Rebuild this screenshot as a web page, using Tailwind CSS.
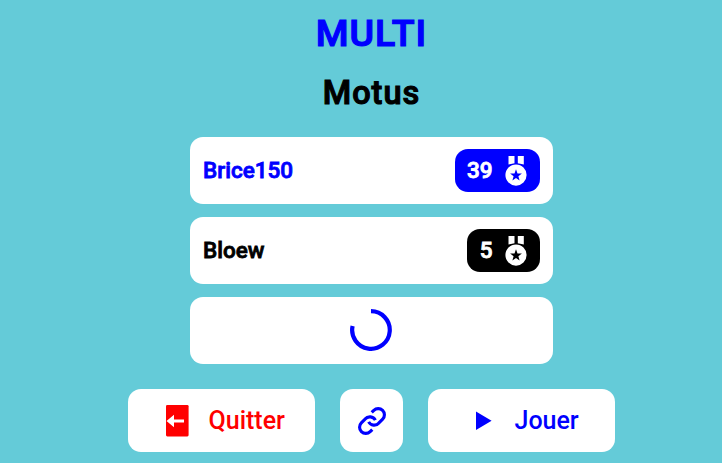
<!DOCTYPE html>
<html lang="fr">
<head>
<meta charset="utf-8">
<title>Motus</title>
<script src="https://cdn.jsdelivr.net/npm/@tailwindcss/browser@4"></script>
</head>
<body class="h-[463px] overflow-hidden bg-[#64cbd8] font-[Roboto,sans-serif] text-black">
<main class="flex flex-col items-center pt-[8px] pl-[21px]">
  <h1 class="h-[50px] text-[37.5px] leading-[50px] font-medium tracking-[1px] text-[#00f] [-webkit-text-stroke:1.2px]">MULTI</h1>
  <h2 class="mt-[13px] h-[44px] text-[32.5px] leading-[44px] font-medium tracking-[1px] [-webkit-text-stroke:1.1px]">Motus</h2>
  <ul class="mt-[22px] flex w-[363px] flex-col gap-[13px] text-[22.5px] font-medium [-webkit-text-stroke:0.8px]">
    <li class="flex h-[67px] items-center justify-between rounded-[13px] bg-white px-[13px]">
      <span class="text-[#00f]">Brice150</span>
      <span class="flex h-[43px] items-center gap-[12.5px] rounded-[13px] bg-[#00f] pr-[13px] pl-[12px] text-white">
        <span>39</span>
        <svg class="h-[30px] w-[22px]" viewBox="0 0 22 30" fill="currentColor"><path d="M3.5 0h6v7.2l-6 1.3zM12.8 0h6v8.5l-6-1.3z"/><path fill-rule="evenodd" d="M11 8.5a10.6 10.6 0 1 1 0 21.2a10.6 10.6 0 1 1 0-21.2zM11 13.2l-1.5 4.2-4.4.1 3.5 2.7-1.2 4.3 3.6-2.5 3.6 2.5-1.2-4.3 3.5-2.7-4.4-.1z"/></svg>
      </span>
    </li>
    <li class="flex h-[67px] items-center justify-between rounded-[13px] bg-white px-[13px]">
      <span>Bloew</span>
      <span class="flex h-[43px] items-center gap-[12.5px] rounded-[13px] bg-black pr-[13px] pl-[12.5px] text-white">
        <span>5</span>
        <svg class="h-[30px] w-[22px]" viewBox="0 0 22 30" fill="currentColor"><path d="M3.5 0h6v7.2l-6 1.3zM12.8 0h6v8.5l-6-1.3z"/><path fill-rule="evenodd" d="M11 8.5a10.6 10.6 0 1 1 0 21.2a10.6 10.6 0 1 1 0-21.2zM11 13.2l-1.5 4.2-4.4.1 3.5 2.7-1.2 4.3 3.6-2.5 3.6 2.5-1.2-4.3 3.5-2.7-4.4-.1z"/></svg>
      </span>
    </li>
    <li class="flex h-[67px] items-center justify-center rounded-[13px] bg-white pr-[1px] pb-[1px]">
      <svg class="size-[42px]" viewBox="0 0 42 42" fill="none" stroke="#00f" stroke-width="4.2"><path d="M21 2.2A18.8 18.8 0 1 1 2.6 17"/></svg>
    </li>
  </ul>
  <div class="mt-[25px] flex gap-[25px] text-[25px] font-medium">
    <button class="flex h-[63px] w-[187px] items-center gap-[19.5px] rounded-[13px] bg-white pl-[38px] text-[#f00]">
      <svg class="h-[32px] w-[23px]" viewBox="0 0 23 32"><rect width="22.6" height="31.4" rx="1.3" fill="#f00"/><path d="M.5 16L8 9.7v4.8h10v3H8v4.8z" fill="#fff"/></svg>
      <span>Quitter</span>
    </button>
    <button class="flex size-[63px] items-center justify-center rounded-[13px] bg-white pl-[1px] text-[#00f]" aria-label="Lien">
      <svg class="size-[30px]" viewBox="0 0 24 24" fill="none" stroke="currentColor" stroke-width="2.5" stroke-linejoin="round"><path d="M9.3 12.7a5 5 0 0 0 8.24.84l3-3a5 5 0 0 0-7.07-7.07l-1.7 1.7"/><path d="M14.7 11.3a5 5 0 0 0-8.24-.84l-3 3a5 5 0 0 0 7.07 7.07l1.7-1.7"/></svg>
    </button>
    <button class="flex h-[63px] w-[187px] items-center gap-[23px] rounded-[13px] bg-white pl-[47.5px] text-[#00f]">
      <svg class="h-[20px] w-[16px]" viewBox="0 0 16 20" fill="currentColor"><path d="M0 .4v18.6L15.6 9.7z"/></svg>
      <span>Jouer</span>
    </button>
  </div>
</main>
</body>
</html>
